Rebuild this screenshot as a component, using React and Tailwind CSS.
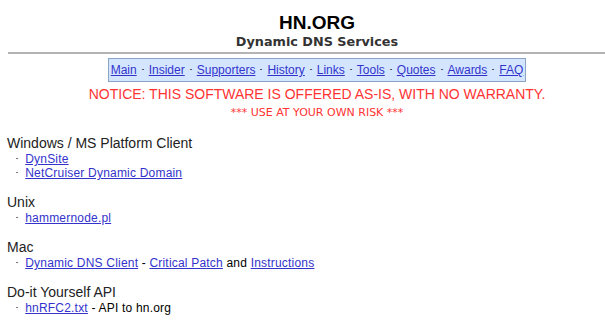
import React from "react";

const links = ["Main", "Insider", "Supporters", "History", "Links", "Tools", "Quotes", "Awards", "FAQ"];

const A = ({ children }) => (
  <a href="#" className="text-[#3333cc] underline">
    {children}
  </a>
);

const Item = ({ children }) => (
  <div className="pl-[7px] h-[14px] leading-[14px] text-[12px] tracking-[0.2px]">
    <span className="text-[#555] mr-[5px]">･</span>
    {children}
  </div>
);

const Section = ({ title, children }) => (
  <div className="mb-[14px]">
    <div className="text-[14px] leading-[17px] text-[#222]">{title}</div>
    {children}
  </div>
);

export default function App() {
  return (
    <div className="w-[605px] h-[323px] overflow-hidden bg-white font-['Liberation_Sans',Arial,sans-serif] text-black">
      <div className="w-[634px] px-[8px]">
        {/* header */}
        <div className="text-center pt-[12px]">
          <div className="text-[19px] font-bold leading-[22px]">HN.ORG</div>
          <div className="text-[12.8px] font-bold leading-[16px] text-[#333] font-['DejaVu_Sans',Verdana,sans-serif]">
            Dynamic DNS Services
          </div>
        </div>
        <div className="mt-[2px] h-[2px] bg-[#b4b4b4]" />

        {/* nav */}
        <div className="flex justify-center mt-[4px]">
          <div className="border border-[#8aa4c8] bg-[#d4e6ff] px-[2px] h-[24px] flex items-center text-[12px] text-[#333]">
            {links.map((l, i) => (
              <span key={l}>
                {i > 0 && <span className="mx-[3px]">･</span>}
                <A>{l}</A>
              </span>
            ))}
          </div>
        </div>

        {/* notice */}
        <div className="text-center text-[#ff3333] mt-[4px]">
          <div className="text-[14px] leading-[17px]">NOTICE: THIS SOFTWARE IS OFFERED AS-IS, WITH NO WARRANTY.</div>
          <div className="mt-[3px] text-[11px] leading-[14px] font-['DejaVu_Sans',Verdana,sans-serif]">
            *** USE AT YOUR OWN RISK ***
          </div>
        </div>
      </div>

      {/* sections */}
      <div className="pl-[7px] mt-[15px]">
        <Section title="Windows / MS Platform Client">
          <Item><A>DynSite</A></Item>
          <Item><A>NetCruiser Dynamic Domain</A></Item>
        </Section>
        <Section title="Unix">
          <Item><A>hammernode.pl</A></Item>
        </Section>
        <Section title="Mac">
          <Item>
            <A>Dynamic DNS Client</A> - <A>Critical Patch</A> and <A>Instructions</A>
          </Item>
        </Section>
        <Section title="Do-it Yourself API">
          <Item>
            <A>hnRFC2.txt</A> - API to hn.org
          </Item>
        </Section>
      </div>
    </div>
  );
}
